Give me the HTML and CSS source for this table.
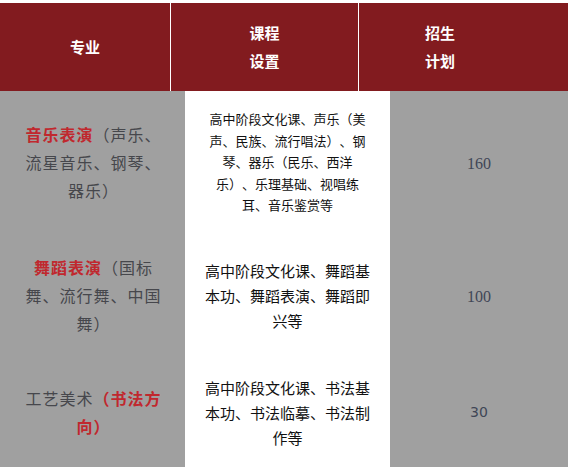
FILE: index.html
```html
<!DOCTYPE html>
<html lang="zh">
<head>
<meta charset="utf-8">
<link rel="stylesheet" href="styles.css">
</head>
<body>
<div class="page">
  <div class="head">
    <div class="hcell h1"><div>专业</div></div>
    <div class="hcell h2"><div>课程<br>设置</div></div>
    <div class="hcell h3"><div>招生<br>计划</div></div>
  </div>
  <div class="grid">
    <div class="cell major"><p class="txt"><span class="red">音乐表演</span>（声乐、流星音乐、钢琴、器乐）</p></div>
    <div class="cell course small"><p class="txt">高中阶段文化课、声乐（美声、民族、流行唱法）、钢琴、器乐（民乐、西洋乐）、乐理基础、视唱练耳、音乐鉴赏等</p></div>
    <div class="cell num serif"><p class="txt">160</p></div>

    <div class="cell major"><p class="txt"><span class="red">舞蹈表演</span>（国标舞、流行舞、中国舞）</p></div>
    <div class="cell course"><p class="txt">高中阶段文化课、舞蹈基本功、舞蹈表演、舞蹈即兴等</p></div>
    <div class="cell num serif"><p class="txt">100</p></div>

    <div class="cell major"><p class="txt">工艺美术<span class="red">（书法方向）</span></p></div>
    <div class="cell course"><p class="txt">高中阶段文化课、书法基本功、书法临摹、书法制作等</p></div>
    <div class="cell num sans"><p class="txt">30</p></div>
  </div>
</div>
</body>
</html>
```

FILE: styles.css
```css
html, body {
  margin: 0;
  padding: 0;
  background: #ffffff;
}
body {
  width: 568px;
  height: 468px;
  overflow: hidden;
  font-family: "Noto Sans CJK SC", "Noto Sans", sans-serif;
  text-spacing-trim: space-all;
}
.page {
  padding-top: 3px;
}
.head {
  display: grid;
  grid-template-columns: 170px 187px 209px;
  column-gap: 1px;
  background: #ffffff;
  height: 88px;
}
.hcell {
  background: #821b1f;
  color: #ffffff;
  font-weight: bold;
  font-size: 15px;
  line-height: 28px;
  display: flex;
  align-items: center;
  justify-content: center;
  text-align: center;
}
.h3 {
  padding-right: 47px;
}
.grid {
  display: grid;
  grid-template-columns: 185px 205px 178px;
  grid-template-rows: 142px 124px 110px;
}
.cell {
  display: flex;
  align-items: center;
  justify-content: center;
  text-align: center;
}
.txt {
  margin: 0;
  width: 100%;
}
.major {
  background: #a0a0a0;
  color: #46474c;
  font-size: 16px;
  letter-spacing: 1px;
  line-height: 28px;
  padding: 0 22px 0 24px;
}
.red {
  color: #c0282e;
  font-weight: bold;
}
.course {
  background: #ffffff;
  color: #111111;
  font-size: 15px;
  line-height: 25px;
  padding: 0 19px;
}
.course.small {
  font-size: 13px;
  line-height: 21.5px;
}
.num {
  background: #a0a0a0;
  color: #3f4656;
  font-size: 16px;
}
.serif {
  font-family: "Liberation Serif", "DejaVu Serif", serif;
  padding-top: 4px;
}
.sans {
  font-family: "DejaVu Sans", "Noto Sans", sans-serif;
  font-size: 14px;
}
```
